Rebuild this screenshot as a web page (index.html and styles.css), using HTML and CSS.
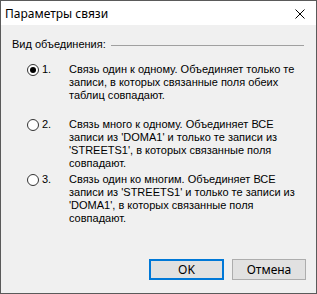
FILE: index.html
```html
<!DOCTYPE html>
<html lang="ru">
<head>
    <meta charset="UTF-8">
    <title>Параметры связи</title>
    <link rel="stylesheet" href="styles.css">
</head>
<body>
    <div class="dialog">
        <div class="title-bar">
            <span class="title-text">Параметры связи</span>
            <span class="close-button">
                <svg width="10" height="10" viewBox="0 0 10 10">
                    <path d="M0.5 0.5 L9.5 9.5 M9.5 0.5 L0.5 9.5" stroke="#000" stroke-width="1" fill="none"/>
                </svg>
            </span>
        </div>

        <div class="dialog-body">
            <div class="group-header">
                <span class="group-label">Вид объединения:</span>
                <span class="group-line"></span>
            </div>

            <div class="option-list">
                <div class="option">
                    <span class="radio checked"></span>
                    <span class="option-num">1.</span>
                    <span class="option-text">Связь один к одному. Объединяет только те записи, в которых связанные поля обеих таблиц совпадают.</span>
                </div>
                <div class="option">
                    <span class="radio"></span>
                    <span class="option-num">2.</span>
                    <span class="option-text">Связь много к одному. Объединяет ВСЕ записи из 'DOMA1' и только те записи из 'STREETS1', в которых связанные поля совпадают.</span>
                </div>
                <div class="option">
                    <span class="radio"></span>
                    <span class="option-num">3.</span>
                    <span class="option-text">Связь один ко многим. Объединяет ВСЕ записи из 'STREETS1' и только те записи из 'DOMA1', в которых связанные поля совпадают.</span>
                </div>
            </div>
        </div>

        <div class="dialog-footer">
            <button type="button" class="btn btn-default">OK</button>
            <button type="button" class="btn">Отмена</button>
        </div>
    </div>
</body>
</html>
```

FILE: styles.css
```css
* {
    margin: 0;
    padding: 0;
    box-sizing: border-box;
}

body {
    font-family: 'Liberation Sans', Arial, sans-serif;
    font-size: 11px;
    color: #000;
    background: #f0f0f0;
}

.dialog {
    width: 317px;
    height: 294px;
    border: 1px solid #5a5a5a;
    background: #f0f0f0;
    display: flex;
    flex-direction: column;
}

.title-bar {
    height: 24px;
    background: #fff;
    display: flex;
    align-items: center;
    justify-content: space-between;
    padding: 0 11px 0 4px;
}

.title-text {
    font-family: 'Noto Sans', 'Open Sans', sans-serif;
    font-size: 12px;
    margin-top: 1px;
}

.close-button {
    display: flex;
    width: 10px;
    height: 10px;
    margin-top: 2px;
}

.dialog-body {
    flex: 1;
    padding: 13px 12px 0 11px;
}

.group-header {
    display: flex;
    align-items: center;
    line-height: 13px;
}

.group-label {
    white-space: nowrap;
}

.group-line {
    flex: 1;
    height: 1px;
    margin-left: 5px;
    margin-top: 1px;
    background: #a0a0a0;
}

.option-list {
    margin-top: 12px;
    padding-left: 15px;
}

.option {
    display: flex;
    align-items: flex-start;
    height: 55px;
    line-height: 13px;
}

.radio {
    flex: none;
    width: 12px;
    height: 12px;
    margin-top: 1px;
    border: 1px solid #333;
    border-radius: 50%;
    background: #fff;
    display: flex;
    align-items: center;
    justify-content: center;
}

.radio.checked::after {
    content: '';
    width: 6px;
    height: 6px;
    border-radius: 50%;
    background: #000;
}

.option-num {
    flex: none;
    width: 27px;
    margin-left: 3px;
}

.option-text {
    flex: 1;
}

.dialog-footer {
    display: flex;
    justify-content: flex-end;
    gap: 8px;
    padding: 0 10px 13px 0;
}

.btn {
    width: 74px;
    height: 21px;
    border: 1px solid #adadad;
    background: #e1e1e1;
    font-family: 'Noto Sans', 'Open Sans', sans-serif;
    font-size: 12px;
    color: #000;
}

.btn-default {
    width: 75px;
    border: 2px solid #0078d7;
}
```
